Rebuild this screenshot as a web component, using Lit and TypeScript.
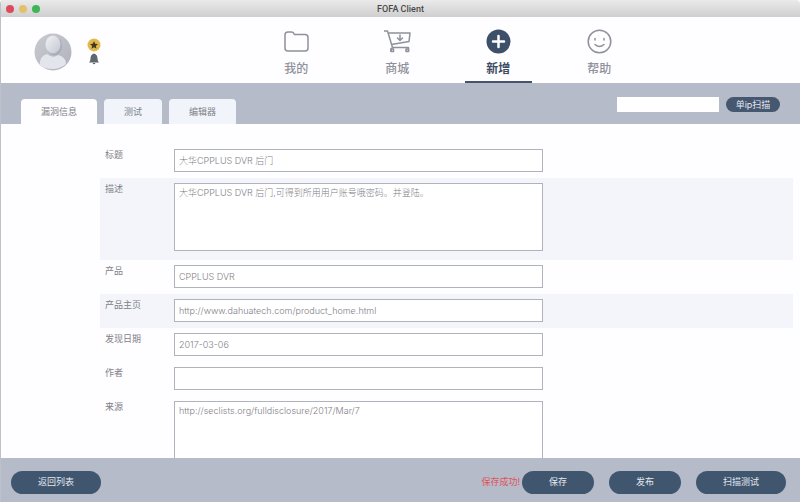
import { LitElement, html, css, svg, nothing } from "lit";
import { customElement, state } from "lit/decorators.js";
import { classMap } from "lit/directives/class-map.js";

interface Field {
  id: string;
  label: string;
  value: string;
  multiline?: boolean;
  shaded?: boolean;
}

const FIELDS: Field[] = [
  { id: "title", label: "标题", value: "大华CPPLUS DVR 后门" },
  {
    id: "description",
    label: "描述",
    value: "大华CPPLUS DVR 后门,可得到所用用户账号哦密码。并登陆。",
    multiline: true,
    shaded: true,
  },
  { id: "product", label: "产品", value: "CPPLUS DVR" },
  {
    id: "homepage",
    label: "产品主页",
    value: "http://www.dahuatech.com/product_home.html",
    shaded: true,
  },
  { id: "date", label: "发现日期", value: "2017-03-06" },
  { id: "author", label: "作者", value: "" },
  {
    id: "source",
    label: "来源",
    value: "http://seclists.org/fulldisclosure/2017/Mar/7",
    multiline: true,
  },
];

const folderIcon = svg`<path d="M2 6Q2 3 5 3H8.500Q10.300 3 10.800 4.300L11.500 5.600H22Q25 5.600 25 8.600V19Q25 22 22 22H5Q2 22 2 19Z"/>`;
const cartIcon = svg`<path d="M0 2H3.500L8.500 18.500H24.500V22M5 4H26L25 12.500L7.500 15.500M8.500 18.500L7 20V22"/><path d="M16 6V11M13.500 9L16 11.500L18.500 9"/><rect x="7" y="20" width="2.500" height="2.500"/><rect x="22" y="20" width="2.500" height="2.500"/>`;
const plusIcon = svg`<circle class="solid" cx="13.500" cy="12.500" r="12"/><path class="plus" d="M13.500 7V18M8 12.500H19"/>`;
const smileIcon = svg`<circle cx="13.500" cy="12.500" r="11.300"/><path d="M9 9.500V11M18 9.500V11M9 15.500Q13.500 19.500 18 15.500"/>`;

const NAV = [
  { label: "我的", icon: folderIcon },
  { label: "商城", icon: cartIcon },
  { label: "新增", icon: plusIcon },
  { label: "帮助", icon: smileIcon },
];

const TABS = ["漏洞信息", "测试", "编辑器"];

@customElement("app-root")
export class AppRoot extends LitElement {
  @state() private section = 2;
  @state() private tab = 0;

  static styles = css`
    :host {
      display: flex;
      flex-direction: column;
      height: 100vh;
      box-sizing: border-box;
      overflow: hidden;
      border-left: 1px solid #c0c1c8;
      border-radius: 4px 4px 0 0;
      background: #fefdff;
      color: #7f8087;
      font: 9px/12px Inter, "Noto Sans CJK SC", sans-serif;
    }
    *,
    *::before {
      box-sizing: border-box;
    }
    button,
    input,
    textarea {
      font: inherit;
      color: inherit;
      margin: 0;
      border: 0;
      border-radius: 0;
      outline: 0;
    }
    button {
      cursor: pointer;
      padding: 0;
      background: none;
    }
    .titlebar {
      flex: none;
      display: grid;
      grid-template-columns: 1fr auto 1fr;
      align-items: center;
      height: 17px;
      padding: 1px 5px 0;
      background: linear-gradient(#eaeaea, #cfcfcf);
    }
    .lights {
      display: flex;
      gap: 5px;
    }
    .light {
      width: 8px;
      height: 8px;
      border-radius: 50%;
    }
    .close {
      background: #dc4a5c;
    }
    .minimize {
      background: #e5c068;
    }
    .maximize {
      background: #3fb556;
    }
    .app-name {
      margin: 0;
      color: #4a4a4a;
      font: 500 9px/12px Roboto, sans-serif;
    }
    .header {
      flex: none;
      display: flex;
      height: 66px;
    }
    .user {
      width: calc(33% - 2px);
      display: flex;
      align-items: center;
      gap: 15px;
      padding: 4px 0 0 33px;
    }
    .avatar {
      width: 38px;
      height: 38px;
    }
    .badges {
      display: flex;
      flex-direction: column;
      align-items: center;
      gap: 1px;
      padding-bottom: 2px;
    }
    .badge {
      display: block;
    }
    .nav {
      display: flex;
      gap: 34px;
    }
    .nav-item {
      display: flex;
      flex-direction: column;
      align-items: center;
      gap: 7px;
      width: 67px;
      padding-top: 12px;
      border-bottom: 2px solid transparent;
      color: #8f919b;
      font-size: 12px;
      line-height: 16px;
      font-weight: 500;
    }
    .nav-item.active {
      color: #3e4c63;
      font-weight: 700;
      border-color: #46536a;
    }
    .nav-icon {
      fill: none;
      stroke: currentColor;
      stroke-width: 1.5;
      stroke-linejoin: round;
      stroke-linecap: round;
    }
    .solid {
      fill: #3e4f69;
      stroke: none;
    }
    .plus {
      stroke: #fff;
      stroke-width: 2.5;
    }
    .toolbar {
      flex: none;
      display: flex;
      justify-content: space-between;
      height: 41px;
      padding: 0 20px;
      background: #b6bbc9;
    }
    .tabs {
      display: flex;
      align-items: flex-end;
      gap: 7px;
    }
    .tab {
      height: 25px;
      padding: 0 20px;
      border-radius: 4px 4px 0 0;
      background: #f1f5fb;
    }
    .tab.active {
      background: #fefdff;
    }
    .scan {
      display: flex;
      align-items: center;
      gap: 7px;
      padding-top: 2px;
    }
    .ip {
      width: 102px;
      height: 15px;
      padding: 0 4px;
      background: #fff;
    }
    .pill {
      height: 23px;
      border-radius: 12px;
      background: #40566f;
      color: #e4e9f0;
    }
    .pill.mini {
      height: 15px;
      width: 54px;
      background: #465770;
    }
    .content {
      flex: 1;
      min-height: 0;
      overflow: auto;
      scrollbar-width: none;
      padding: 20px 7px 0 99px;
    }
    .row {
      display: grid;
      grid-template-columns: 74px 3fr 2fr;
      padding: 5px 4px 6px 0;
    }
    .row.multiline {
      padding-bottom: 9px;
    }
    .row.shaded {
      background: #f3f5fa;
    }
    .label {
      padding-left: 5px;
    }
    .control {
      display: block;
      width: 100%;
      height: 23px;
      padding: 0 4px;
      border: 1px solid #b0b3bb;
      background: #fff;
      font-weight: 300;
    }
    textarea.control {
      height: 68px;
      padding: 3px 4px;
      resize: none;
      overflow: hidden;
    }
    .footer {
      flex: none;
      display: flex;
      align-items: center;
      height: 44px;
      padding: 4px 14px 0 10px;
      background: #b6bbc9;
    }
    .message {
      margin-left: auto;
      padding-right: 2px;
      color: #e0525a;
    }
    .actions {
      display: flex;
      gap: 15px;
    }
    .footer .pill {
      width: 72px;
    }
    .footer .pill.wide {
      width: 90px;
    }
  `;

  private renderField(field: Field) {
    return html`
      <div
        class=${classMap({
          row: true,
          multiline: !!field.multiline,
          shaded: !!field.shaded,
        })}
      >
        <label class="label" for=${field.id}>${field.label}</label>
        ${field.multiline
          ? html`<textarea class="control" id=${field.id} spellcheck="false" .value=${field.value}></textarea>`
          : html`<input class="control" id=${field.id} type="text" .value=${field.value} />`}
      </div>
    `;
  }

  render() {
    return html`
      <div class="titlebar">
        <div class="lights">
          <span class="light close"></span>
          <span class="light minimize"></span>
          <span class="light maximize"></span>
        </div>
        <h1 class="app-name">FOFA Client</h1>
      </div>

      <header class="header">
        <div class="user">
          <svg class="avatar" viewBox="0 0 38 38" aria-hidden="true">
            <defs>
              <linearGradient id="back" x1="0" y1="0" x2="1" y2="1">
                <stop offset="0" stop-color="#c9cbd1" />
                <stop offset="1" stop-color="#afb2bd" />
              </linearGradient>
              <linearGradient id="skin" x1="0" y1="0" x2="1" y2="1">
                <stop offset="0" stop-color="#f1f2f5" />
                <stop offset="1" stop-color="#c4c7d1" />
              </linearGradient>
              <clipPath id="disc"><circle cx="19" cy="19" r="18.500" /></clipPath>
            </defs>
            <g clip-path="url(#disc)">
              <rect width="38" height="38" fill="url(#back)" />
              <ellipse cx="20.500" cy="13" rx="7.500" ry="9.500" fill="#a9adb9" />
              <path d="M6 33Q5 23 13 21Q19 26 24 22Q32 24 32 31Q26 36 19 36Q11 36 6 33Z" fill="#e3e5ec" />
              <ellipse cx="19" cy="11.500" rx="7.500" ry="9" fill="url(#skin)" />
            </g>
          </svg>
          <div class="badges">
            <svg class="badge" width="14" height="14" viewBox="0 0 14 14" aria-hidden="true">
              <circle cx="7" cy="7" r="6.500" fill="#e3b94f" />
              <path d="M7 3L8.200 5.700L11 6L8.900 7.900L9.500 10.700L7 9.300L4.500 10.700L5.100 7.900L3 6L5.800 5.700Z" fill="#453c20" />
            </svg>
            <svg class="badge" width="12" height="12" viewBox="0 0 12 12" aria-hidden="true">
              <path d="M6 .5Q9.500 1.500 9.500 5.500Q9.500 8 11 9.500H1Q2.500 8 2.500 5.500Q2.500 1.500 6 .5ZM4.500 10H7.500Q6 12.500 4.500 10Z" fill="#5c676e" />
            </svg>
          </div>
        </div>
        <nav class="nav">
          ${NAV.map(
            (item, i) => html`
              <button
                class=${classMap({ "nav-item": true, active: i === this.section })}
                aria-current=${i === this.section ? "page" : nothing}
                @click=${() => (this.section = i)}
              >
                <svg class="nav-icon" width="27" height="25" viewBox="0 0 27 25" aria-hidden="true">${item.icon}</svg>
                <span>${item.label}</span>
              </button>
            `
          )}
        </nav>
      </header>

      <div class="toolbar">
        <div class="tabs" role="tablist">
          ${TABS.map(
            (name, i) => html`
              <button
                class=${classMap({ tab: true, active: i === this.tab })}
                role="tab"
                aria-selected=${i === this.tab ? "true" : "false"}
                @click=${() => (this.tab = i)}
              >${name}</button>
            `
          )}
        </div>
        <div class="scan">
          <input class="ip" type="text" aria-label="单ip扫描" />
          <button class="pill mini">单ip扫描</button>
        </div>
      </div>

      <main class="content">${FIELDS.map((f) => this.renderField(f))}</main>

      <footer class="footer">
        <button class="pill wide">返回列表</button>
        <span class="message" role="status">保存成功!</span>
        <div class="actions">
          <button class="pill">保存</button>
          <button class="pill">发布</button>
          <button class="pill wide">扫描测试</button>
        </div>
      </footer>
    `;
  }
}
